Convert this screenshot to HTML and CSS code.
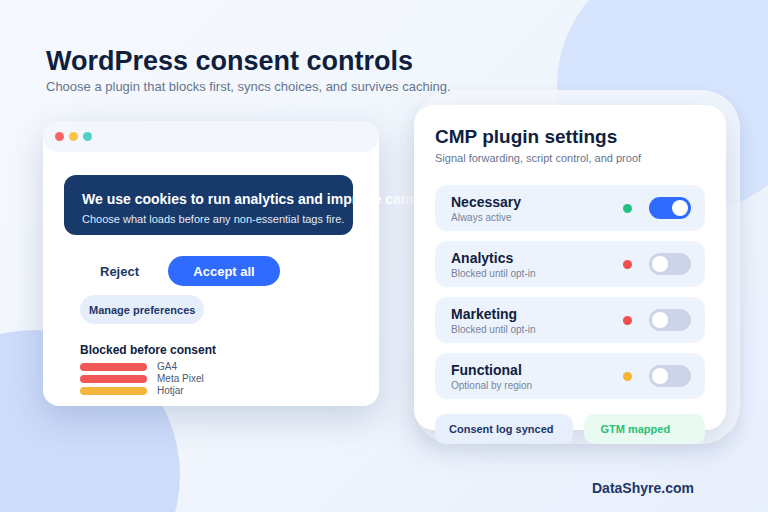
FILE: index.html
```html
<!DOCTYPE html>
<html lang="en">
<head>
<meta charset="utf-8">
<title>WordPress consent controls</title>
<link rel="stylesheet" href="styles.css">
</head>
<body>
<div class="blob blob-top"></div>
<div class="blob blob-bottom"></div>

<main class="page">
  <header class="intro">
    <h1>WordPress consent controls</h1>
    <p>Choose a plugin that blocks first, syncs choices, and survives caching.</p>
  </header>

  <section class="stage">
    <article class="browser">
      <div class="browser-bar">
        <span class="win-dot red"></span>
        <span class="win-dot yellow"></span>
        <span class="win-dot teal"></span>
      </div>
      <div class="browser-body">
        <div class="banner">
          <h2>We use cookies to run analytics and improve campaigns.</h2>
          <p>Choose what loads before any non-essential tags fire.</p>
        </div>
        <div class="actions">
          <button class="btn btn-ghost">Reject</button>
          <button class="btn btn-primary">Accept all</button>
        </div>
        <button class="btn btn-soft">Manage preferences</button>
        <h3>Blocked before consent</h3>
        <ul class="blocked">
          <li><span class="bar bar-red"></span>GA4</li>
          <li><span class="bar bar-red"></span>Meta Pixel</li>
          <li><span class="bar bar-amber"></span>Hotjar</li>
        </ul>
      </div>
    </article>

    <div class="settings-wrap">
      <article class="settings">
        <h2>CMP plugin settings</h2>
        <p class="settings-sub">Signal forwarding, script control, and proof</p>
        <ul class="toggles">
          <li class="toggle-row">
            <div class="toggle-text"><strong>Necessary</strong><span>Always active</span></div>
            <span class="status-dot ok"></span>
            <span class="switch on"></span>
          </li>
          <li class="toggle-row">
            <div class="toggle-text"><strong>Analytics</strong><span>Blocked until opt-in</span></div>
            <span class="status-dot blocked-dot"></span>
            <span class="switch"></span>
          </li>
          <li class="toggle-row">
            <div class="toggle-text"><strong>Marketing</strong><span>Blocked until opt-in</span></div>
            <span class="status-dot blocked-dot"></span>
            <span class="switch"></span>
          </li>
          <li class="toggle-row">
            <div class="toggle-text"><strong>Functional</strong><span>Optional by region</span></div>
            <span class="status-dot optional"></span>
            <span class="switch"></span>
          </li>
        </ul>
        <div class="chips">
          <span class="chip chip-log">Consent log synced</span>
          <span class="chip chip-gtm">GTM mapped</span>
        </div>
      </article>
    </div>
  </section>

  <footer class="brand">DataShyre.com</footer>
</main>
</body>
</html>
```

FILE: styles.css
```css
* {
  box-sizing: border-box;
  margin: 0;
  padding: 0;
}

html,
body {
  width: 768px;
  height: 512px;
}

body {
  position: relative;
  overflow: hidden;
  font-family: "Liberation Sans", Arial, sans-serif;
  color: #10213f;
  background: linear-gradient(135deg, #f6f9fe 0%, #f0f5fd 55%, #e8effc 100%);
}

/* soft background circles */
.blob {
  position: absolute;
  border-radius: 50%;
}

.blob-top {
  left: 557px;
  top: -44px;
  width: 258px;
  height: 258px;
  background: #d7e4fd;
}

.blob-bottom {
  left: -110px;
  top: 330px;
  width: 290px;
  height: 290px;
  background: #cedcfb;
}

.page {
  position: relative;
  padding: 45px 0 0 43px;
}

/* heading sits above the glass panel behind the settings card */
.intro {
  position: relative;
  z-index: 2;
}

.intro h1 {
  margin-left: 3px;
  font-size: 27px;
  line-height: 32px;
  font-weight: 700;
  color: #0f1f3d;
}

.intro p {
  margin: 2px 0 0 3px;
  font-size: 13px;
  line-height: 16px;
  color: #66758f;
}

.stage {
  display: flex;
  align-items: flex-start;
  gap: 35px;
  margin-top: 10px;
}

/* browser mock with cookie banner */
.browser {
  width: 336px;
  margin-top: 16px;
  padding-bottom: 9px;
  background: #fff;
  border-radius: 16px;
  box-shadow: 0 12px 34px rgba(28, 56, 110, 0.19);
}

.browser-bar {
  display: flex;
  align-items: center;
  gap: 5px;
  height: 31px;
  padding-left: 12px;
  background: #f3f6fc;
  border-radius: 16px;
}

.win-dot {
  width: 9px;
  height: 9px;
  border-radius: 50%;
}

.win-dot.red { background: #f76464; }
.win-dot.yellow { background: #f7c644; }
.win-dot.teal { background: #4fd1c5; }

.browser-body {
  padding: 23px 0 0 21px;
}

.banner {
  width: 289px;
  height: 60px;
  padding: 15px 0 0 18px;
  background: #173a6b;
  border-radius: 12px;
  color: #fff;
  white-space: nowrap;
}

.banner h2 {
  font-size: 14px;
  line-height: 18px;
  font-weight: 700;
}

.banner p {
  margin-top: 4px;
  font-size: 11px;
  line-height: 14px;
  color: #e2e9f6;
}

.actions {
  display: flex;
  gap: 9px;
  margin: 21px 0 0 16px;
}

.btn {
  border: 0;
  font-family: inherit;
  font-weight: 700;
  border-radius: 15px;
  cursor: pointer;
}

.btn-ghost {
  height: 30px;
  padding: 0 20px;
  background: transparent;
  color: #1d3766;
  font-size: 13px;
}

.btn-primary {
  width: 112px;
  height: 30px;
  background: #2f6bff;
  color: #fff;
  font-size: 13px;
}

.btn-soft {
  display: block;
  height: 29px;
  margin: 9px 0 0 16px;
  padding: 0 9px;
  background: #e6eefc;
  color: #1d3766;
  font-size: 11px;
}

.browser-body h3 {
  margin: 19px 0 0 16px;
  font-size: 12px;
  line-height: 15px;
  font-weight: 700;
  color: #10213f;
}

.blocked {
  list-style: none;
  margin: 3px 0 0 16px;
}

.blocked li {
  display: flex;
  align-items: center;
  gap: 10px;
  height: 12px;
  font-size: 10px;
  line-height: 12px;
  color: #4a5872;
}

.bar {
  width: 67px;
  height: 8px;
  border-radius: 4px;
}

.bar-red { background: #f25757; }
.bar-amber { background: #f5b63f; }

/* settings card */
.settings-wrap {
  position: relative;
  z-index: 1;
  width: 312px;
}

.settings-wrap::before {
  content: "";
  position: absolute;
  top: -15px;
  right: -14px;
  bottom: -14px;
  left: 0;
  border-radius: 38px;
  background: rgba(245, 248, 253, 0.88);
  box-shadow: 0 6px 18px rgba(28, 56, 110, 0.07);
}

.settings {
  position: relative;
  display: flow-root;
  padding: 21px 21px 0;
  background: #fff;
  border-radius: 20px;
  box-shadow: 0 14px 34px rgba(28, 56, 110, 0.16);
}

.settings h2 {
  font-size: 19px;
  line-height: 22px;
  font-weight: 700;
  color: #10213f;
}

.settings-sub {
  margin-top: 3px;
  font-size: 11px;
  line-height: 14px;
  color: #66758f;
}

.toggles {
  list-style: none;
  display: flex;
  flex-direction: column;
  gap: 10px;
  margin-top: 20px;
}

.toggle-row {
  display: flex;
  align-items: center;
  height: 46px;
  padding: 0 14px 0 16px;
  background: #edf3fc;
  border-radius: 12px;
}

.toggle-text {
  flex: 1;
  display: flex;
  flex-direction: column;
  padding-top: 2px;
}

.toggle-text strong {
  font-size: 14px;
  line-height: 16px;
  font-weight: 700;
  color: #10213f;
}

.toggle-text span {
  margin-top: 2px;
  font-size: 10px;
  line-height: 12px;
  color: #75839b;
}

.status-dot {
  width: 9px;
  height: 9px;
  margin-right: 17px;
  border-radius: 50%;
}

.status-dot.ok { background: #22c17f; }
.status-dot.blocked-dot { background: #ef4f4f; }
.status-dot.optional { background: #f5b431; }

.switch {
  position: relative;
  width: 42px;
  height: 22px;
  border-radius: 11px;
  background: #cbd5e7;
}

.switch::after {
  content: "";
  position: absolute;
  top: 3px;
  left: 3px;
  width: 16px;
  height: 16px;
  border-radius: 50%;
  background: #fff;
}

.switch.on {
  background: #2f6bff;
}

.switch.on::after {
  left: 23px;
}

.chips {
  display: flex;
  gap: 11px;
  margin: 15px 0 -14px;
}

.chip {
  display: flex;
  align-items: center;
  height: 30px;
  border-radius: 10px;
  font-size: 11px;
  font-weight: 700;
}

.chip-log {
  width: 139px;
  padding-left: 14px;
  background: #e8effc;
  color: #1d3766;
}

.chip-gtm {
  width: 121px;
  padding-left: 16px;
  background: #e8faf1;
  color: #2bbf7a;
}

.brand {
  margin: 50px 0 0 549px;
  font-size: 14px;
  line-height: 17px;
  font-weight: 700;
  color: #1d3766;
}
```
